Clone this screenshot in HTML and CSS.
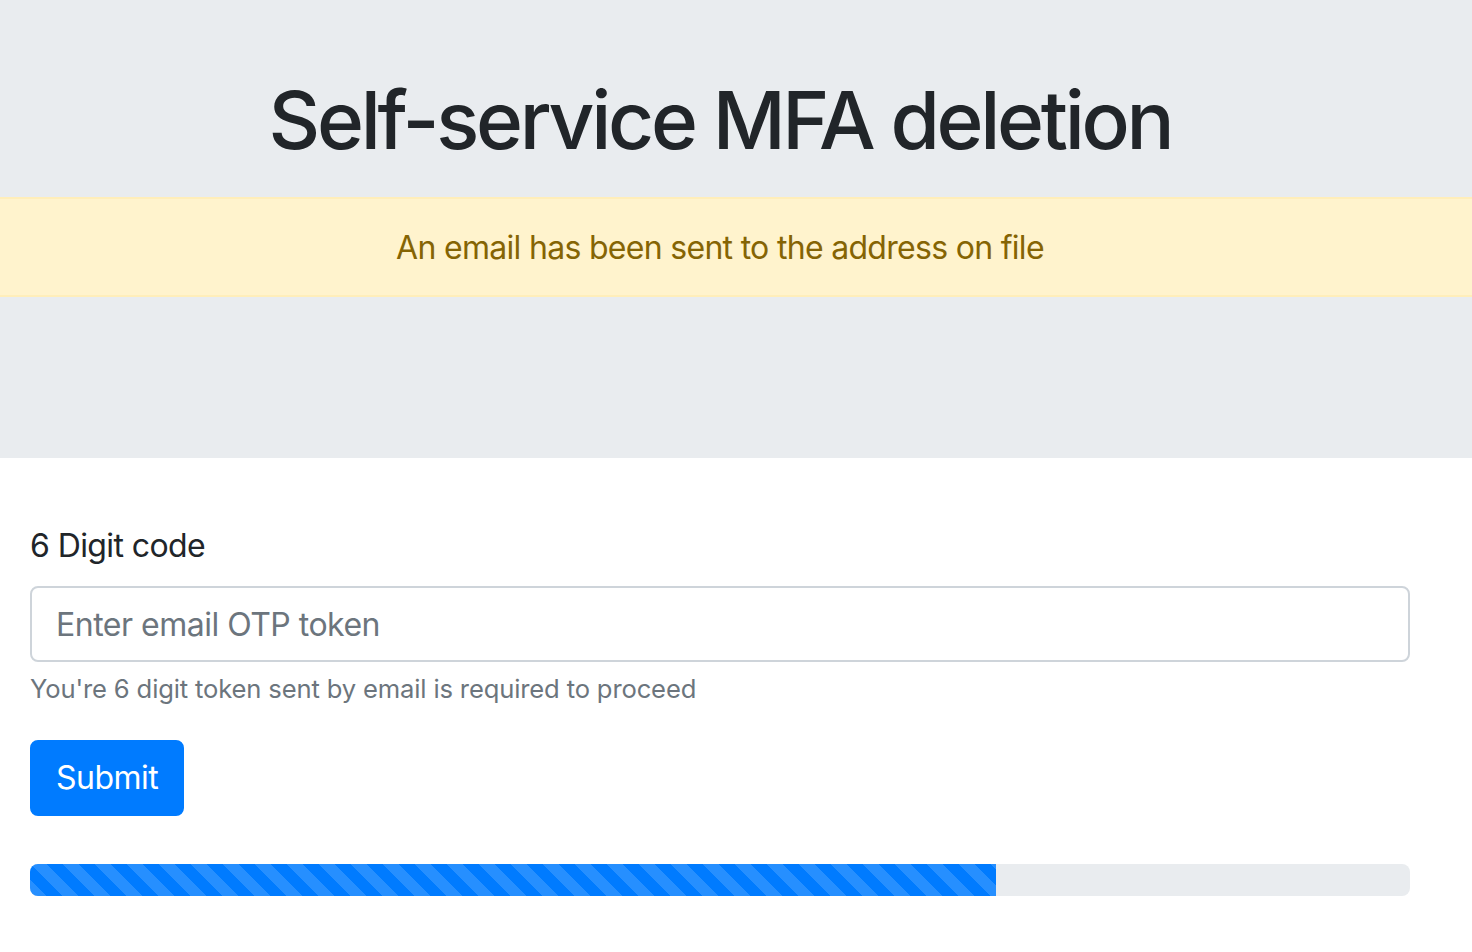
FILE: index.html
```html
<!DOCTYPE html>
<html lang="en">
<head>
    <meta charset="UTF-8">
    <title>Self-service MFA deletion</title>
    <link rel="stylesheet" href="styles.css">
</head>
<body>
    <div class="jumbotron">
        <h1 class="title">Self-service MFA deletion</h1>
        <div class="alert alert-warning">An email has been sent to the address on file</div>
    </div>
    <div class="container">
        <form class="otp-form">
            <div class="form-group">
                <label for="token">6 Digit code</label>
                <input type="text" id="token" class="form-control" placeholder="Enter email OTP token">
                <small class="form-text">You're 6 digit token sent by email is required to proceed</small>
            </div>
            <button type="submit" class="btn btn-primary">Submit</button>
        </form>
        <div class="progress">
            <div class="progress-bar progress-bar-striped" style="width: 70%"></div>
        </div>
    </div>
</body>
</html>
```

FILE: styles.css
```css
* {
    box-sizing: border-box;
}

body {
    margin: 0;
    font-family: Inter, "Noto Sans", "Liberation Sans", sans-serif;
    font-size: 32px;
    line-height: 1.5;
    color: #212529;
    background-color: #fff;
}

.jumbotron {
    background-color: #e9ecef;
    padding: 72px 0 161px;
    margin-bottom: 64px;
    text-align: center;
}

.title {
    margin: 0 0 29px;
    padding-right: 32px;
    font-size: 80px;
    font-weight: 500;
    line-height: 1.2;
    letter-spacing: -3.3px;
}

.alert {
    padding: 25px 72px 23px 40px;
    border: 2px solid #ffeeba;
    border-left: none;
    border-right: none;
    letter-spacing: -0.7px;
}

.alert-warning {
    color: #856404;
    background-color: #fff3cd;
}

.container {
    padding: 0 62px 0 30px;
}

.form-group {
    margin-bottom: 32px;
}

label {
    display: inline-block;
    margin-bottom: 16px;
    letter-spacing: -0.6px;
}

.form-control {
    display: block;
    width: 100%;
    height: 76px;
    padding: 12px 24px;
    font-family: inherit;
    font-size: 32px;
    line-height: 1.5;
    letter-spacing: -0.5px;
    color: #495057;
    background-color: #fff;
    border: 2px solid #ced4da;
    border-radius: 8px;
    outline: none;
}

.form-control::placeholder {
    color: #6c757d;
    opacity: 1;
}

.form-text {
    display: block;
    margin-top: 8px;
    font-size: 25.6px;
    letter-spacing: -0.15px;
    color: #6c757d;
}

.btn {
    display: inline-block;
    padding: 12px 24px;
    font-family: inherit;
    font-size: 32px;
    line-height: 1.5;
    letter-spacing: -0.5px;
    border: 2px solid transparent;
    border-radius: 8px;
    cursor: pointer;
}

.btn-primary {
    color: #fff;
    background-color: #007bff;
    border-color: #007bff;
}

.progress {
    display: flex;
    height: 32px;
    margin-top: 48px;
    overflow: hidden;
    background-color: #e9ecef;
    border-radius: 8px;
}

.progress-bar {
    background-color: #007bff;
}

.progress-bar-striped {
    background-image: linear-gradient(45deg, rgba(255, 255, 255, .15) 25%, transparent 25%, transparent 50%, rgba(255, 255, 255, .15) 50%, rgba(255, 255, 255, .15) 75%, transparent 75%, transparent);
    background-size: 32px 32px;
}
```
